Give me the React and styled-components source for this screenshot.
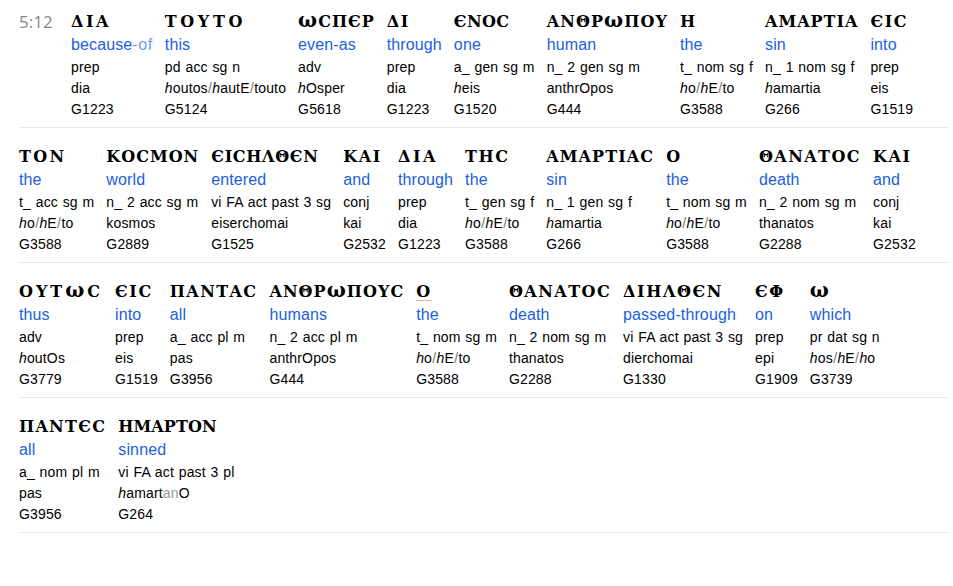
import React from 'react'
import styled, { createGlobalStyle } from 'styled-components'

// track is the letter-spacing of a word whose capitals run wider or tighter than the default
const rows = [
    [
        { greek: 'ΔΙΑ', track: 2.6, gloss: 'because', tail: '-of', morph: 'prep', lemma: 'dia', strong: 'G1223' },
        { greek: 'ΤΟΥΤΟ', track: 3.6, gloss: 'this', morph: 'pd acc sg n', lemma: '_h_outos/_h_autE/touto', strong: 'G5124' },
        { greek: 'ωCΠЄΡ', track: 1, gloss: 'even-as', morph: 'adv', lemma: '_h_Osper', strong: 'G5618' },
        { greek: 'ΔΙ', gloss: 'through', morph: 'prep', lemma: 'dia', strong: 'G1223' },
        { greek: 'ЄΝΟC', track: 0.4, gloss: 'one', morph: 'a_ gen sg m', lemma: '_h_eis', strong: 'G1520' },
        { greek: 'ΑΝΘΡωΠΟΥ', track: 1.1, gloss: 'human', morph: 'n_ 2 gen sg m', lemma: 'anthrOpos', strong: 'G444' },
        { greek: 'Η', gloss: 'the', morph: 't_ nom sg f', lemma: '_h_o/_h_E/to', strong: 'G3588' },
        { greek: 'ΑΜΑΡΤΙΑ', track: 1, gloss: 'sin', morph: 'n_ 1 nom sg f', lemma: '_h_amartia', strong: 'G266' },
        { greek: 'ЄΙC', gloss: 'into', morph: 'prep', lemma: 'eis', strong: 'G1519' },
    ],
    [
        { greek: 'ΤΟΝ', track: 2.3, gloss: 'the', morph: 't_ acc sg m', lemma: '_h_o/_h_E/to', strong: 'G3588' },
        { greek: 'ΚΟCΜΟΝ', track: 1, gloss: 'world', morph: 'n_ 2 acc sg m', lemma: 'kosmos', strong: 'G2889' },
        { greek: 'ЄΙCΗΛΘЄΝ', track: 0.7, gloss: 'entered', morph: 'vi FA act past 3 sg', lemma: 'eiserchomai', strong: 'G1525' },
        { greek: 'ΚΑΙ', gloss: 'and', morph: 'conj', lemma: 'kai', strong: 'G2532' },
        { greek: 'ΔΙΑ', track: 2.6, gloss: 'through', morph: 'prep', lemma: 'dia', strong: 'G1223' },
        { greek: 'ΤΗC', gloss: 'the', morph: 't_ gen sg f', lemma: '_h_o/_h_E/to', strong: 'G3588' },
        { greek: 'ΑΜΑΡΤΙΑC', track: 1.1, gloss: 'sin', morph: 'n_ 1 gen sg f', lemma: '_h_amartia', strong: 'G266' },
        { greek: 'Ο', gloss: 'the', morph: 't_ nom sg m', lemma: '_h_o/_h_E/to', strong: 'G3588' },
        { greek: 'ΘΑΝΑΤΟC', track: 1.45, gloss: 'death', morph: 'n_ 2 nom sg m', lemma: 'thanatos', strong: 'G2288' },
        { greek: 'ΚΑΙ', gloss: 'and', morph: 'conj', lemma: 'kai', strong: 'G2532' },
    ],
    [
        { greek: 'ΟΥΤωC', track: 3, gloss: 'thus', morph: 'adv', lemma: '_h_outOs', strong: 'G3779' },
        { greek: 'ЄΙC', gloss: 'into', morph: 'prep', lemma: 'eis', strong: 'G1519' },
        { greek: 'ΠΑΝΤΑC', track: 1.4, gloss: 'all', morph: 'a_ acc pl m', lemma: 'pas', strong: 'G3956' },
        { greek: 'ΑΝΘΡωΠΟΥC', track: 1.05, gloss: 'humans', morph: 'n_ 2 acc pl m', lemma: 'anthrOpos', strong: 'G444' },
        { greek: 'Ο', marked: true, gloss: 'the', morph: 't_ nom sg m', lemma: '_h_o/_h_E/to', strong: 'G3588' },
        { greek: 'ΘΑΝΑΤΟC', track: 1.45, gloss: 'death', morph: 'n_ 2 nom sg m', lemma: 'thanatos', strong: 'G2288' },
        { greek: 'ΔΙΗΛΘЄΝ', gloss: 'passed-through', morph: 'vi FA act past 3 sg', lemma: 'dierchomai', strong: 'G1330' },
        { greek: 'ЄΦ', gloss: 'on', morph: 'prep', lemma: 'epi', strong: 'G1909' },
        { greek: 'ω', gloss: 'which', morph: 'pr dat sg n', lemma: '_h_os/_h_E/_h_o', strong: 'G3739' },
    ],
    [
        { greek: 'ΠΑΝΤЄC', track: 1.3, gloss: 'all', morph: 'a_ nom pl m', lemma: 'pas', strong: 'G3956' },
        { greek: 'ΗΜΑΡΤΟΝ', track: 0.1, gloss: 'sinned', morph: 'vi FA act past 3 pl', lemma: '_h_amart~an~O', strong: 'G264' },
    ],
]

// lemma markup: _x_ is the rough breathing, ~x~ a dropped stem, / is a separator
function Lemma({ text }) {
    const parts = text.split(/(_[^_]+_|~[^~]+~|\/)/).filter(Boolean)
    return (
        <SmallLine>
            {parts.map((part, index) => {
                if (part === '/') return <Slash key={index}>/</Slash>
                if (part[0] === '_') return <Rough key={index}>{part.slice(1, -1)}</Rough>
                if (part[0] === '~') return <Stem key={index}>{part.slice(1, -1)}</Stem>
                return part
            })}
        </SmallLine>
    )
}

// the uncial omega stands as tall as the capitals, so it is set larger
function GreekWord({ text }) {
    return text.split(/(ω)/).filter(Boolean).map((part, index) => (
        part === 'ω' ? <Omega key={index}>ω</Omega> : part
    ))
}

function App() {
    return (
        <Page>
            <GlobalStyle />
            {rows.map((words, rowIndex) => (
                <Row key={rowIndex}>
                    {rowIndex === 0 && <VerseRef>5:12</VerseRef>}
                    {words.map((word, index) => (
                        <Word key={index}>
                            <Greek $marked={word.marked} $track={word.track}><GreekWord text={word.greek} /></Greek>
                            <Gloss>
                                {word.gloss}
                                {word.tail && <GlossTail>{word.tail}</GlossTail>}
                            </Gloss>
                            <SmallLine>{word.morph}</SmallLine>
                            <Lemma text={word.lemma} />
                            <SmallLine>{word.strong}</SmallLine>
                        </Word>
                    ))}
                </Row>
            ))}
        </Page>
    )
}

const GlobalStyle = createGlobalStyle`
    body {
        margin: 0;
        background: #fff;
        font-family: "Liberation Sans", Arial, sans-serif;
    }
`;

const Page = styled.div`
    padding: 12px 5px 0 19px;
`;

const Row = styled.div`
    display: flex;
    gap: 12px;
    padding: 19px 0 7px;
    border-bottom: 1px solid #e4e8f2;

    &:first-child {
        padding-top: 0;
    }
`;

const VerseRef = styled.div`
    width: 40px;
    font-family: "Open Sans", sans-serif;
    font-size: 17px;
    line-height: 20px;
    color: #888;
`;

const Word = styled.div`
    display: flex;
    flex-direction: column;
    white-space: nowrap;
`;

const Greek = styled.div`
    align-self: flex-start;
    padding-top: 1px;
    margin-bottom: 1px;
    font-family: "DejaVu Serif", serif;
    font-weight: bold;
    font-size: 16px;
    line-height: 18px;
    letter-spacing: ${props => props.$track ?? 1.6}px;
    color: #000;
    ${props => props.$marked && 'box-shadow: inset 0 -1px 0 #f4b48c;'}
`;

const Omega = styled.span`
    font-size: 20px;
    line-height: 0;
`;

const Gloss = styled.div`
    margin: 3px 0 2px;
    font-size: 16px;
    line-height: 20px;
    letter-spacing: 0.12px;
    color: #1a5fe0;
`;

const GlossTail = styled.span`
    letter-spacing: 0.6px;
    color: #6f9bf0;
`;

const SmallLine = styled.div`
    font-size: 14px;
    line-height: 21px;
    letter-spacing: 0.15px;
    word-spacing: 0.7px;
    color: #000;
`;

const Rough = styled.i``;

const Slash = styled.span`
    padding: 0 0.25px;
    color: #777;
`;

const Stem = styled.span`
    color: #999;
`;

export default App
